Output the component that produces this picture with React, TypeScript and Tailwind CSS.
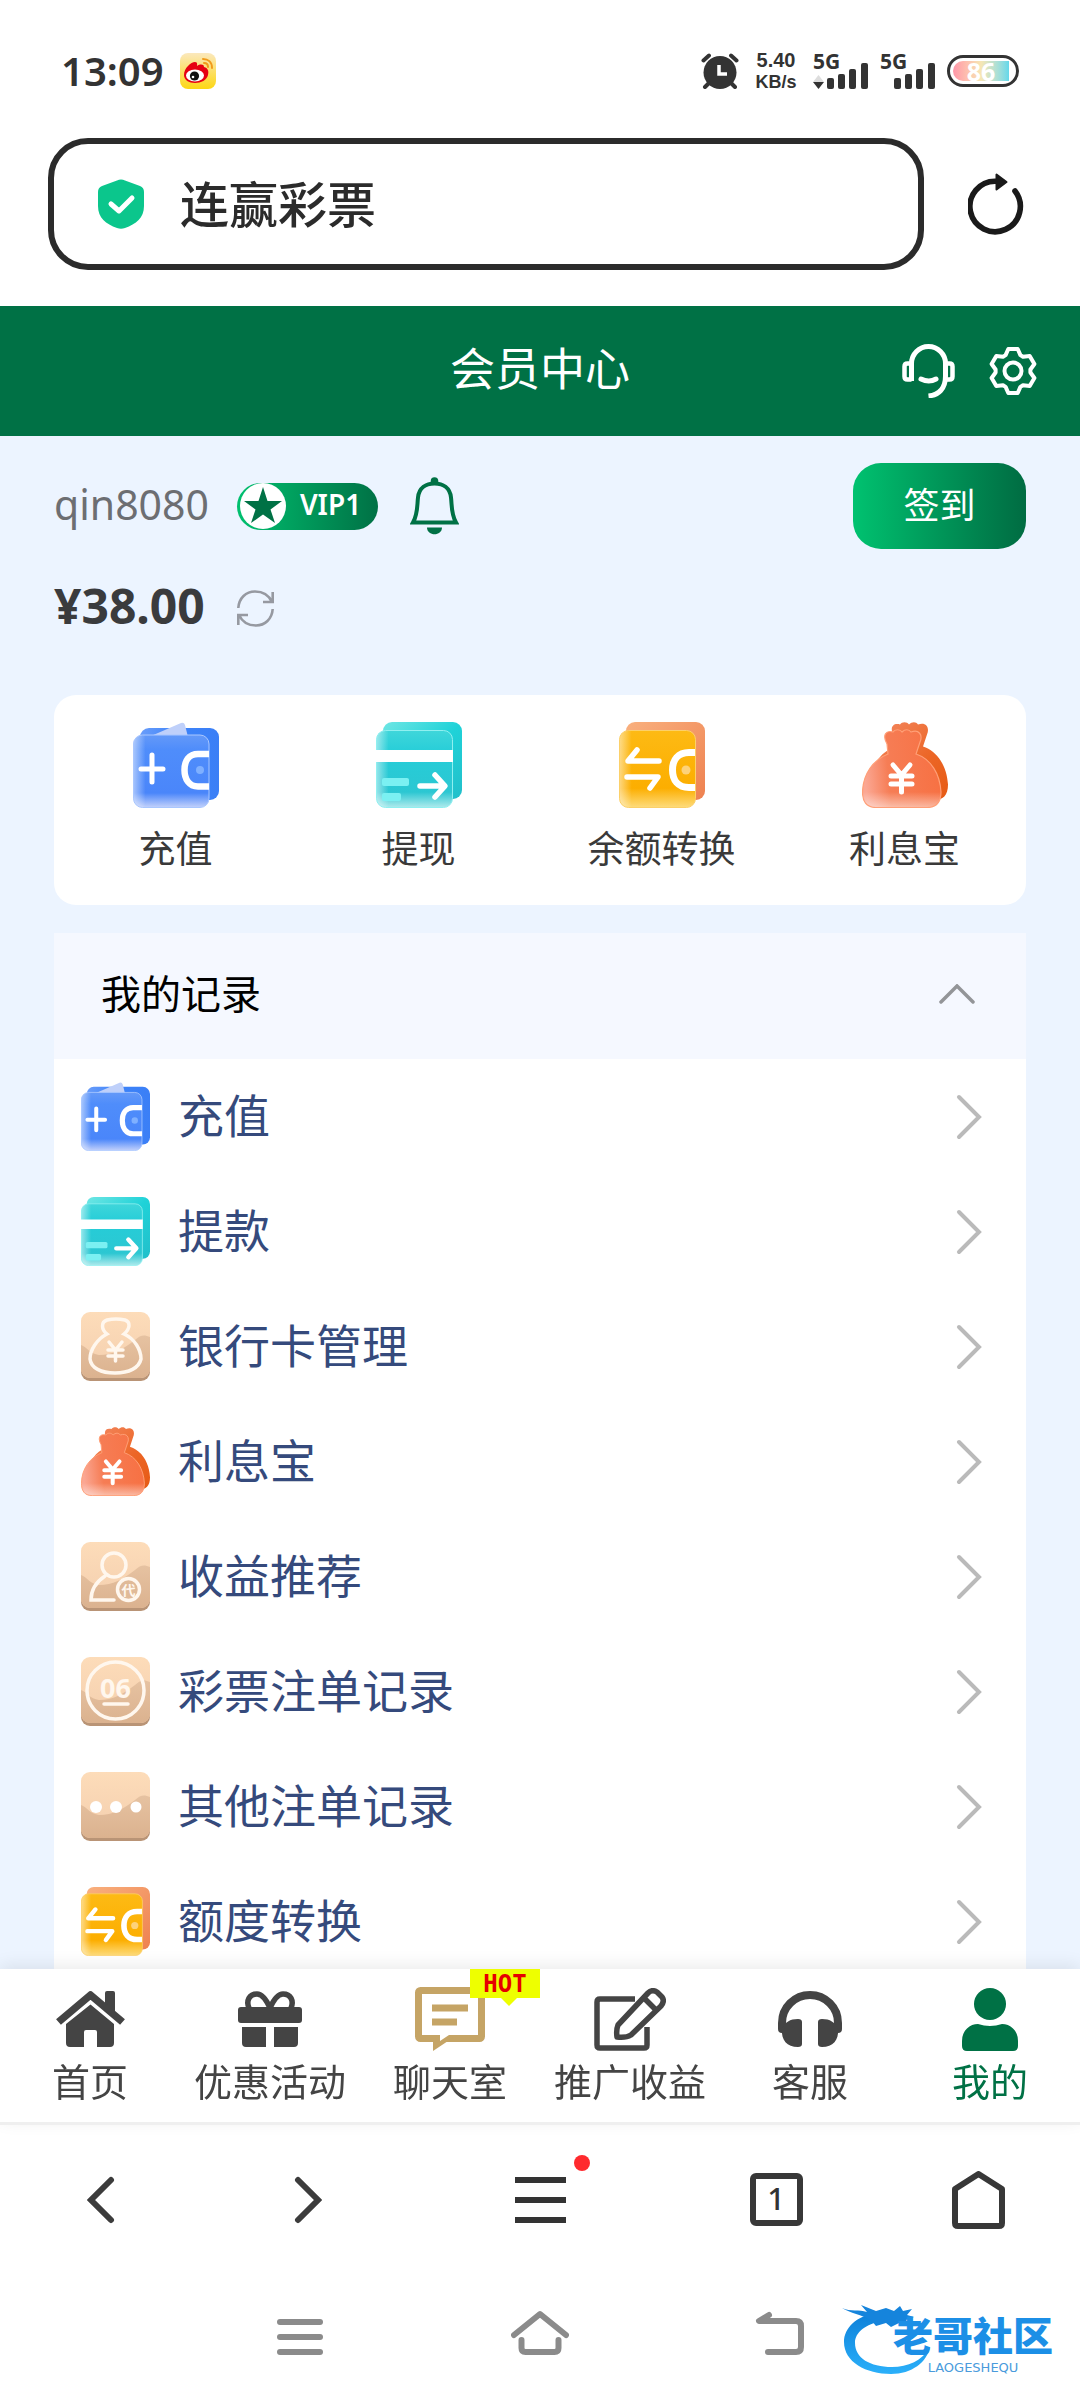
import React from "react";

const GREEN = "#007145";

/* ---------- status bar ---------- */

function WeiboIcon() {
  return (
    <svg className="h-9 w-9" viewBox="0 0 36 36" aria-hidden="true">
      <defs>
        <linearGradient id="weibo" x1="0" y1="0" x2="0" y2="1">
          <stop offset="0" stopColor="#fbe8bd" />
          <stop offset="1" stopColor="#fdd713" />
        </linearGradient>
      </defs>
      <rect width="36" height="36" rx="8" fill="url(#weibo)" />
      <path d="M4 22C4 15 11 9 15 9c3 0 2 3 2 4 3-2 7-2 7 1 4 1 5 4 4 8-1 5-7 8-13 8S4 27 4 22Z" fill="#e60012" />
      <ellipse cx="15" cy="22.500" rx="9" ry="6" fill="#fff" />
      <circle cx="14.500" cy="23" r="4.600" fill="#111" />
      <circle cx="13" cy="24" r="1.300" fill="#fff" />
      <path d="M23 6c5 0 9 3 9 9M24 10c3 0 4 2 4 4" stroke="#f19a1b" strokeWidth="2" fill="none" strokeLinecap="round" />
    </svg>
  );
}

function AlarmIcon() {
  return (
    <svg className="h-9 w-[38px]" viewBox="0 0 38 36" fill="none" stroke="#333" strokeLinecap="round" aria-hidden="true">
      <circle cx="19" cy="19.500" r="16.500" fill="#333" stroke="none" />
      <path d="M2.500 7.500 8 2.500M35.500 7.500 30 2.500" strokeWidth="4" />
      <path d="M8 30 4 34M30 30l4 4" strokeWidth="4" />
      <path d="M18 12v9h8" stroke="#fff" strokeWidth="3.500" strokeLinecap="butt" />
    </svg>
  );
}

function Signal({ traffic = false }: { traffic?: boolean }) {
  return (
    <div className="flex h-10 w-[56px] flex-col">
      <span className="text-[21px] leading-5 font-bold">5G</span>
      <svg className="-mt-2 h-7 w-14" viewBox="0 0 56 28" fill="#333" aria-hidden="true">
        {traffic && (
          <>
            <path d="M0 19 5.500 12 11 19Z" fill="#ddd" />
            <path d="M0 19h11L5.500 26Z" />
          </>
        )}
        <rect x="14" y="15" width="7" height="11" rx="2" />
        <rect x="25" y="11" width="7" height="15" rx="2" />
        <rect x="36" y="6" width="7" height="20" rx="2" />
        <rect x="48" y="0" width="7" height="26" rx="2" />
      </svg>
    </div>
  );
}

function StatusBar() {
  return (
    <div className="flex h-10 items-center justify-between pr-[61px] pl-[61px] text-[#333]">
      <div className="flex items-center gap-4">
        <span className="text-[40px] leading-10 font-semibold">13:09</span>
        <WeiboIcon />
      </div>
      <div className="flex items-center gap-[11px]">
        <AlarmIcon />
        <div className="flex w-[52px] flex-col items-center font-['Liberation_Sans',sans-serif] text-[20px] leading-[22px] font-bold">
          <span>5.40</span>
          <span className="text-[18px]">KB/s</span>
        </div>
        <Signal traffic />
        <Signal />
        <div className="flex h-8 w-[72px] items-center rounded-full border-[3px] border-[#333] bg-white p-[3px]">
          <div className="flex h-full w-14 items-center justify-center rounded-l-full bg-linear-to-r from-[#ff96a8] via-[#f6e6b4] to-[#64d8ea] text-[25px] leading-5 font-bold text-white">
            86
          </div>
        </div>
      </div>
    </div>
  );
}

function AddressBar() {
  return (
    <div className="flex items-center gap-11 pt-[47px] pr-[56px] pb-9 pl-12">
      <div className="flex h-[132px] min-w-0 flex-1 items-center rounded-[40px] border-[6px] border-[#2b2b2b] pl-11">
        <svg className="h-[50px] w-[46px] shrink-0" viewBox="0 0 46 50" aria-hidden="true">
          <path d="M19 1.500q4-2 8 0L42 7q4 1.500 4 6v14c0 12-8 18-19 22q-4 1.500-8 0C8 45 0 39 0 27V13q0-4.500 4-6Z" fill="#0bc68c" />
          <path d="m13 25 8 7 13-13" stroke="#fff" strokeWidth="5" fill="none" strokeLinecap="round" strokeLinejoin="round" />
        </svg>
        <input
          aria-label="地址栏"
          defaultValue="连赢彩票"
          className="ml-9 min-w-0 flex-1 bg-transparent text-[49px] leading-[60px] font-medium text-[#2b2b2b] outline-none"
        />
      </div>
      <button type="button" aria-label="刷新页面">
        <svg className="block h-[62px] w-14" viewBox="0 0 56 62" aria-hidden="true">
          <path d="M47 18A25.200 25.200 0 1 1 28 8.300" fill="none" stroke="#1a1a1a" strokeWidth="5.600" strokeLinecap="round" />
          <path d="M28.500 1.500v15L38.500 9Z" fill="#1a1a1a" stroke="#1a1a1a" strokeWidth="2" strokeLinejoin="round" />
        </svg>
      </button>
    </div>
  );
}

/* ---------- page header ---------- */

const gearPath =
  Array.from({ length: 6 }, (_, i) => i * 60 - 90)
    .flatMap((a) => [
      [a - 25, 17.5],
      [a - 12, 22.5],
      [a + 12, 22.5],
      [a + 25, 17.5],
    ])
    .map(([a, r], i) => {
      const t = (a * Math.PI) / 180;
      return `${i ? "L" : "M"}${(25 + r * Math.cos(t)).toFixed(1)} ${(25 + r * Math.sin(t)).toFixed(1)}`;
    })
    .join("") + "Z";

function PageHeader() {
  return (
    <header className="grid h-[130px] shrink-0 grid-cols-[1fr_auto_1fr] items-center bg-[#007145] text-white">
      <h1 className="col-start-2 pb-1 text-[45px] leading-[60px]">会员中心</h1>
      <div className="flex items-center justify-end gap-8 pr-[42px]">
        <button type="button" aria-label="在线客服">
          <svg className="block h-[54px] w-[54px]" viewBox="0 0 54 54" fill="none" stroke="#fff" strokeWidth="5" aria-hidden="true">
            <path d="M9.500 37V19.500a17 17 0 0 1 34 0V32c0 13-7 19-17 20" />
            <path d="M9.500 35.500h-4q-3 0-3-3v-10q0-3 3-3h4M43.500 19.500h4q3 0 3 3v10q0 3-3 3h-4" strokeWidth="4.500" />
            <path d="M19 35q8 4 15 0" strokeLinecap="round" />
          </svg>
        </button>
        <button type="button" aria-label="设置">
          <svg className="block h-[50px] w-[50px]" viewBox="0 0 50 50" fill="none" stroke="#fff" strokeWidth="4" strokeLinejoin="round" aria-hidden="true">
            <path d={gearPath} />
            <circle cx="25" cy="25" r="8.500" />
          </svg>
        </button>
      </div>
    </header>
  );
}

/* ---------- coloured icons ---------- */

type IconProps = { className: string };

function WalletIcon({ className }: IconProps) {
  return (
    <svg className={className} viewBox="0 0 86 86" aria-hidden="true">
      <defs>
        <linearGradient id="walletBack" x1="0" y1="0" x2="1" y2="0">
          <stop offset="0" stopColor="#6a9dfa" />
          <stop offset=".5" stopColor="#3c83f9" />
          <stop offset="1" stopColor="#3b7ff6" />
        </linearGradient>
        <linearGradient id="walletFront" x1="0" y1="0" x2="0" y2="1">
          <stop offset="0" stopColor="#6499f8" />
          <stop offset=".2" stopColor="#4f8dfb" />
          <stop offset=".8" stopColor="#4a86fa" />
          <stop offset="1" stopColor="#c3d1fb" />
        </linearGradient>
        <linearGradient id="glassEdge" x1="0" y1="0" x2="1" y2="0">
          <stop offset="0" stopColor="#fff" stopOpacity=".5" />
          <stop offset=".16" stopColor="#fff" stopOpacity="0" />
        </linearGradient>
      </defs>
      <rect x="7" y="6" width="79" height="72" rx="9" fill="url(#walletBack)" />
      <path d="M18 14 48 1q3-1 4 2l3 12Z" fill="#bfd0fa" />
      <rect x=".500" y="13" width="75.500" height="72.500" rx="9" fill="url(#walletFront)" />
      <rect x=".500" y="13" width="75.500" height="72.500" rx="9" fill="url(#glassEdge)" stroke="#a9c7ff" strokeWidth="1" />
      <path d="M19 33v27M8 47h22" stroke="#fff" strokeWidth="5" strokeLinecap="round" />
      <path d="M76 32H65c-9 0-13.500 7-13.500 16S56 64.500 65 64.500h11" stroke="#fff" strokeWidth="6.500" fill="none" />
      <circle cx="67" cy="48" r="4" fill="#7fb0ff" />
    </svg>
  );
}

function CardIcon({ className }: IconProps) {
  return (
    <svg className={className} viewBox="0 0 86 86" aria-hidden="true">
      <defs>
        <linearGradient id="cardBack" x1="0" y1="0" x2="1" y2="1">
          <stop offset="0" stopColor="#6fe6e4" />
          <stop offset=".5" stopColor="#1fd2d8" />
          <stop offset="1" stopColor="#22bfca" />
        </linearGradient>
        <linearGradient id="cardFront" x1="0" y1="0" x2="0" y2="1">
          <stop offset="0" stopColor="#3fd6da" />
          <stop offset=".3" stopColor="#25cdd8" />
          <stop offset=".8" stopColor="#2cc7d2" />
          <stop offset="1" stopColor="#aeeaec" />
        </linearGradient>
      </defs>
      <rect x="7" y="0" width="79" height="77" rx="9" fill="url(#cardBack)" />
      <rect x=".500" y="8.500" width="76" height="77" rx="9" fill="url(#cardFront)" />
      <rect x=".500" y="8.500" width="76" height="77" rx="9" fill="url(#glassEdge)" stroke="#8ff0f0" strokeWidth="1" />
      <path d="M0 28h77v12H0Z" fill="#fff" />
      <rect x="6" y="56" width="27" height="8" rx="2" fill="#7bf0f2" />
      <rect x="6" y="71" width="19" height="8" rx="2" fill="#7bf0f2" />
      <path d="M44 64h24M59 53l10 11-10 11" stroke="#fff" strokeWidth="5.500" fill="none" strokeLinecap="round" strokeLinejoin="round" />
    </svg>
  );
}

function TransferIcon({ className }: IconProps) {
  return (
    <svg className={className} viewBox="0 0 86 86" aria-hidden="true">
      <defs>
        <linearGradient id="transferBack" x1="0" y1="0" x2="1" y2="1">
          <stop offset="0" stopColor="#f9b07e" />
          <stop offset="1" stopColor="#ee8150" />
        </linearGradient>
        <linearGradient id="transferFront" x1="0" y1="0" x2="0" y2="1">
          <stop offset="0" stopColor="#fdba14" />
          <stop offset=".75" stopColor="#fcae00" />
          <stop offset="1" stopColor="#fedc7c" />
        </linearGradient>
      </defs>
      <rect x="7" y="0" width="79" height="78" rx="9" fill="url(#transferBack)" />
      <rect x=".500" y="8.500" width="76" height="77" rx="9" fill="url(#transferFront)" />
      <rect x=".500" y="8.500" width="76" height="77" rx="9" fill="url(#glassEdge)" stroke="#fcd069" strokeWidth="1" />
      <path d="M40 39H9l9-11M8 55h31l-8 11" stroke="#fff" strokeWidth="5.500" fill="none" strokeLinecap="round" strokeLinejoin="round" />
      <path d="M76 30.500H70C59 30.500 53.500 38 53.500 48S59 65.500 70 65.500h6" stroke="#fff" strokeWidth="7" fill="none" />
      <circle cx="67" cy="48" r="4.500" fill="#fdd27a" />
    </svg>
  );
}

const BAG =
  "M25 22C20 13 24 8 31 10c2-3 7-3 9 0 3-3 7-3 9 0 8-3 12 3 9 10l-4 12c15 5 24 20 25 38 0 11-5 15.500-14 15.500H14C4 85.500.500 79 .500 70 1 52 11 38 26 32Z";

function MoneyBagIcon({ className }: IconProps) {
  return (
    <svg className={className} viewBox="0 0 86 86" aria-hidden="true">
      <defs>
        <linearGradient id="bagBack" x1="0" y1="0" x2="1" y2="1">
          <stop offset="0" stopColor="#f48b66" />
          <stop offset=".6" stopColor="#ec6626" />
          <stop offset="1" stopColor="#e65a14" />
        </linearGradient>
        <linearGradient id="bagFront" x1="0" y1=".3" x2="1" y2=".2">
          <stop offset="0" stopColor="#fba793" />
          <stop offset=".3" stopColor="#f67d55" />
          <stop offset="1" stopColor="#f77042" />
        </linearGradient>
        <linearGradient id="bagFade" x1="0" y1="0" x2="0" y2="1">
          <stop offset=".8" stopColor="#fff" stopOpacity="0" />
          <stop offset="1" stopColor="#fff" stopOpacity=".5" />
        </linearGradient>
      </defs>
      <path d={BAG} transform="translate(7 -7.500)" fill="url(#bagBack)" />
      <path d={BAG} fill="url(#bagFront)" />
      <path d={BAG} fill="url(#bagFade)" stroke="#ff9f77" strokeWidth="1.200" />
      <g stroke="#fff" strokeWidth="5" strokeLinecap="round" strokeLinejoin="round" fill="none">
        <path d="m31 43 8.500 10L48 43M39.500 53v17M29 54h21M29 62h21" />
      </g>
    </svg>
  );
}

function TanTile({ className, children }: IconProps & { children: React.ReactNode }) {
  return (
    <svg className={className} viewBox="0 0 69 69" aria-hidden="true">
      <defs>
        <linearGradient id="tanTop" x1="0" y1="0" x2="0" y2="1">
          <stop offset="0" stopColor="#fddcb9" />
          <stop offset="1" stopColor="#f3ceae" />
        </linearGradient>
        <linearGradient id="tanWave" x1="0" y1="0" x2="0" y2="1">
          <stop offset="0" stopColor="#e6c2a1" />
          <stop offset="1" stopColor="#dbb28f" />
        </linearGradient>
        <clipPath id="tanClip">
          <rect width="69" height="66" rx="9" />
        </clipPath>
      </defs>
      <rect y="3" width="69" height="66" rx="9" fill="#b99476" />
      <g clipPath="url(#tanClip)">
        <rect width="69" height="66" fill="url(#tanTop)" />
        <path d="M0 33c6 2 9 9 18 10 14 0 24-6 36-15 6-6 10-5 15-3v41H0Z" fill="url(#tanWave)" />
      </g>
      {children}
    </svg>
  );
}

function BankBagIcon({ className }: IconProps) {
  return (
    <TanTile className={className}>
      <path
        d="M26 22c-6-5-6-12 0-14q9-2 18 0c6 2 5 9-1 14 11 5 17 16 17 25-2 9-12 14-26 14S10 56 9 47c0-9 7-20 17-25Z"
        fill="none"
        stroke="#fff7ee"
        strokeWidth="3.500"
      />
      <path
        d="m28 30 6.500 8 6.500-8M34.500 38v11M27 38h15M27 44h15"
        fill="none"
        stroke="#fff7ee"
        strokeWidth="3.500"
        strokeLinecap="round"
      />
    </TanTile>
  );
}

function ReferralIcon({ className }: IconProps) {
  return (
    <TanTile className={className}>
      <g fill="none" stroke="#fff7ee" strokeWidth="3.500" strokeLinecap="round">
        <circle cx="33" cy="23" r="12" />
        <path d="M24 34C15 40 10 47 10 58h23" />
        <circle cx="47.500" cy="47.500" r="11" fill="#e0ba98" />
      </g>
      <text x="47.500" y="53" textAnchor="middle" fontSize="14" fontWeight="700" fill="#fff7ee">
        代
      </text>
    </TanTile>
  );
}

function LotteryIcon({ className }: IconProps) {
  return (
    <TanTile className={className}>
      <circle cx="34.500" cy="33.500" r="28.500" fill="none" stroke="#fff7ee" strokeWidth="3.500" />
      <text x="34.500" y="41" textAnchor="middle" fontSize="27" fontWeight="700" fill="#fff7ee">
        06
      </text>
      <path d="M23 47h24" stroke="#fff7ee" strokeWidth="3.500" strokeLinecap="round" />
    </TanTile>
  );
}

function MoreIcon({ className }: IconProps) {
  return (
    <TanTile className={className}>
      <g fill="#fff">
        <circle cx="15" cy="35" r="6" />
        <circle cx="35" cy="35" r="6" />
        <circle cx="55" cy="35" r="5.500" />
      </g>
    </TanTile>
  );
}

/* ---------- member area ---------- */

function MemberInfo() {
  return (
    <section className="pt-[27px] pb-[52px]">
      <div className="flex h-[86px] items-center">
        <span className="pb-1 text-[41px] leading-[50px] text-[#6c6e72]">qin8080</span>
        <div className="ml-7 flex h-[47px] w-[141px] items-center rounded-full bg-linear-to-r from-[#00c06f] to-[#007145] pl-[3px]">
          <svg className="h-[46px] w-[46px]" viewBox="0 0 46 46" aria-hidden="true">
            <circle cx="23" cy="23" r="23" fill="#fff" />
            <path d="m23 4 4.500 14H42L30.500 26.500 35 40 23 31.500 11 40l4.500-13.500L4 18h14.500Z" fill={GREEN} />
          </svg>
          <span className="ml-[14px] pb-1 text-[28px] leading-8 font-semibold text-white">VIP1</span>
        </div>
        <button type="button" aria-label="消息通知" className="ml-8">
          <svg className="block h-[58px] w-[49px]" viewBox="0 0 49 58" aria-hidden="true">
            <circle cx="24.500" cy="4" r="3.800" fill={GREEN} />
            <path d="M3 45.500c5-9 4-17 5-25C9 11 16 6.500 24.500 6.500S40 11 41 20.500c1 8 0 16 5 25Z" fill="none" stroke={GREEN} strokeWidth="4" />
            <path d="M17 50.500h15c0 9-15 9-15 0Z" fill={GREEN} />
          </svg>
        </button>
        <button
          type="button"
          className="ml-auto h-[86px] w-[173px] rounded-[28px] bg-linear-to-r from-[#00c270] to-[#006c42] text-[36px] leading-[50px] text-white"
        >
          签到
        </button>
      </div>
      <div className="mt-6 flex h-[70px] items-center">
        <span className="pb-1 text-[48px] leading-[60px] font-bold text-[#3a3b3d]">¥38.00</span>
        <button type="button" aria-label="刷新余额" className="ml-8">
          <svg className="block h-[37px] w-[37px]" viewBox="0 0 37 37" fill="none" stroke="#9699a1" strokeWidth="2.600" aria-hidden="true">
            <path d="M1.300 18C2 8 9 1.500 18 1.500c8 0 14 4 17 10.500M35.700 2v10H26" />
            <path d="M35.700 19C35 29 28 35.500 19 35.500 11 35.500 5 31.500 2 25M1.300 35V25H11" />
          </svg>
        </button>
      </div>
    </section>
  );
}

const shortcuts = [
  { label: "充值", Icon: WalletIcon },
  { label: "提现", Icon: CardIcon },
  { label: "余额转换", Icon: TransferIcon },
  { label: "利息宝", Icon: MoneyBagIcon },
];

const records = [
  { label: "充值", Icon: WalletIcon },
  { label: "提款", Icon: CardIcon },
  { label: "银行卡管理", Icon: BankBagIcon },
  { label: "利息宝", Icon: MoneyBagIcon },
  { label: "收益推荐", Icon: ReferralIcon },
  { label: "彩票注单记录", Icon: LotteryIcon },
  { label: "其他注单记录", Icon: MoreIcon },
  { label: "额度转换", Icon: TransferIcon },
];

function Shortcuts() {
  return (
    <nav className="grid grid-cols-4 rounded-[22px] bg-white pt-[27px] pb-[31px]">
      {shortcuts.map(({ label, Icon }) => (
        <a key={label} href="#" className="flex flex-col items-center gap-4 text-[37px] leading-[50px] text-[#3a3a3a]">
          <Icon className="h-[86px] w-[86px]" />
          {label}
        </a>
      ))}
    </nav>
  );
}

function Records() {
  return (
    <section className="mt-7">
      <button
        type="button"
        aria-expanded="true"
        className="flex h-[126px] w-full items-center justify-between bg-[#f5f8ff] pr-[51px] pb-1 pl-[47px] text-[40px] leading-[50px] text-black"
      >
        我的记录
        <svg className="h-5 w-9" viewBox="0 0 36 20" fill="none" stroke="#939598" strokeWidth="3.500" strokeLinecap="round" aria-hidden="true">
          <path d="M2 18 18 2l16 16" />
        </svg>
      </button>
      <ul className="bg-white">
        {records.map(({ label, Icon }) => (
          <li key={label}>
            <a href="#" className="flex h-[115px] items-center gap-7 pr-[43px] pl-[27px] text-[46px] leading-[60px] text-[#354a7c]">
              <Icon className="h-[69px] w-[69px]" />
              <span className="flex-1 pb-1">{label}</span>
              <svg className="h-[46px] w-7" viewBox="0 0 28 46" fill="none" stroke="#bababa" strokeWidth="4" strokeLinecap="round" aria-hidden="true">
                <path d="m4 3 20 20L4 43" />
              </svg>
            </a>
          </li>
        ))}
      </ul>
    </section>
  );
}

/* ---------- tab bar ---------- */

const tabs = [
  {
    label: "首页",
    icon: (
      <svg className="h-14 w-[71px]" viewBox="0 0 71 56" fill="#444" aria-hidden="true">
        <path d="M50 2q0-2 2-2h6q2 0 2 2v20L50 14Z" />
        <path d="M3.500 31 35.500 4l32 27" fill="none" stroke="#444" strokeWidth="7.500" strokeLinejoin="round" />
        <path d="M11 33 35.500 13.500 59 33v19q0 4-4 4H42V41q0-2-2-2h-9q-2 0-2 2v15H15q-4 0-4-4Z" />
      </svg>
    ),
  },
  {
    label: "优惠活动",
    icon: (
      <svg className="h-14 w-16" viewBox="0 0 64 56" fill="#444" aria-hidden="true">
        <rect y="16" width="64" height="16" rx="3" />
        <path d="M4 36h24v20H8q-4 0-4-4ZM36 36h24v16q0 4-4 4H36Z" />
        <path d="M32 17C28 8 24 3 19 3c-8 0-11 7-8 14M32 17C36 8 40 3 45 3c8 0 11 7 8 14" fill="none" stroke="#444" strokeWidth="5.500" />
      </svg>
    ),
  },
  {
    label: "聊天室",
    hot: true,
    icon: (
      <svg className="h-16 w-[70px]" viewBox="0 0 70 64" fill="none" stroke="#c5a465" strokeWidth="7" aria-hidden="true">
        <rect x="3.500" y="3.500" width="63" height="48" rx="2" />
        <path d="M17 21h36M17 35h25" />
        <path d="M18 50h21L18 64Z" fill="#c5a465" stroke="none" />
        <path d="M25 48h9l-9 6Z" fill="#fff" stroke="none" />
      </svg>
    ),
  },
  {
    label: "推广收益",
    icon: (
      <svg className="h-[63px] w-[72px]" viewBox="0 0 72 63" fill="none" stroke="#444" strokeWidth="5.500" strokeLinejoin="round" aria-hidden="true">
        <path d="M41 11H6q-3 0-3 3v43q0 3 3 3h44q3 0 3-3V39" />
        <path d="M23 49q-1-7 1-12L54 5q4-4 9-1l5 5q3 4-1 9L37 47q-5 3-14 2ZM50 10l12 12" />
      </svg>
    ),
  },
  {
    label: "客服",
    icon: (
      <svg className="h-14 w-16" viewBox="0 0 64 56" aria-hidden="true">
        <path d="M4 38v-6a28 28 0 0 1 56 0v6" fill="none" stroke="#444" strokeWidth="8" strokeLinecap="round" />
        <path d="M4 38c3-7 8-10 16-10q4 0 4 3v22q0 3-4 3C9 56 3 49 4 38ZM60 38c-3-7-8-10-16-10q-4 0-4 3v22q0 3 4 3c11 0 17-7 16-18Z" fill="#444" />
      </svg>
    ),
  },
  {
    label: "我的",
    active: true,
    icon: (
      <svg className="h-[63px] w-14" viewBox="0 0 56 63" fill={GREEN} aria-hidden="true">
        <circle cx="28" cy="16" r="16" />
        <path d="M0 53c0-11 8-17 16-17q12 4 24 0c8 0 16 6 16 17v5q0 5-5 5H5q-5 0-5-5Z" />
      </svg>
    ),
  },
];

function TabBar() {
  return (
    <nav className="relative z-10 grid shrink-0 grid-cols-6 border-b-[3px] border-[#efefef] bg-white pt-[18px] pb-4 shadow-[0_-4px_16px_rgba(0,0,0,0.08)]">
      {tabs.map(({ label, icon, hot, active }) => (
        <a
          key={label}
          href="#"
          aria-current={active ? "page" : undefined}
          className={`flex flex-col items-center gap-[5px] text-[38px] leading-[50px] whitespace-nowrap ${active ? "text-[#007145]" : "text-[#444]"}`}
        >
          <span className="relative flex h-16 items-center">
            {icon}
            {hot && (
              <span className="absolute -top-[18px] left-[55px] flex h-[29px] w-[70px] items-center justify-center bg-[#eeff00] font-['DejaVu_Sans_Mono',monospace] text-[24px] leading-6 font-bold text-[#e60000] after:absolute after:top-full after:left-1/2 after:-ml-1 after:border-x-8 after:border-t-8 after:border-x-transparent after:border-t-[#eeff00]">
                HOT
              </span>
            )}
          </span>
          {label}
        </a>
      ))}
    </nav>
  );
}

/* ---------- browser and system navigation ---------- */

function BrowserBar() {
  return (
    <nav className="grid h-[149px] shrink-0 grid-cols-[202fr_212fr_252fr_220fr_184fr] items-center justify-items-center bg-white pr-[10px]">
      <button type="button" aria-label="后退">
        <svg className="block h-12 w-7" viewBox="0 0 28 48" fill="none" stroke="#3c3c3c" strokeWidth="6" strokeLinecap="round" aria-hidden="true">
          <path d="M24 4 4 24l20 20" />
        </svg>
      </button>
      <button type="button" aria-label="前进">
        <svg className="block h-12 w-7" viewBox="0 0 28 48" fill="none" stroke="#3c3c3c" strokeWidth="6" strokeLinecap="round" aria-hidden="true">
          <path d="m4 4 20 20L4 44" />
        </svg>
      </button>
      <button type="button" aria-label="菜单" className="relative flex flex-col gap-[14px]">
        <span className="h-[6px] w-[51px] bg-[#333]" />
        <span className="h-[6px] w-[51px] bg-[#333]" />
        <span className="h-[6px] w-[51px] bg-[#333]" />
        <span className="absolute -top-[22px] -right-6 h-4 w-4 rounded-full bg-[#ff2a2e]" />
      </button>
      <button
        type="button"
        aria-label="标签页"
        className="flex h-[53px] w-[53px] items-center justify-center rounded-[6px] border-[6px] border-[#383838] pb-1 text-[31px] leading-8 font-medium text-[#333]"
      >
        1
      </button>
      <button type="button" aria-label="主页">
        <svg className="block h-[58px] w-[53px]" viewBox="0 0 53 58" fill="none" stroke="#383838" strokeWidth="6" strokeLinejoin="round" aria-hidden="true">
          <path d="M3 18 26.500 3 50 18v34q0 3-3 3H6q-3 0-3-3Z" />
        </svg>
      </button>
    </nav>
  );
}

function SystemBar() {
  return (
    <nav className="relative grid h-[126px] shrink-0 grid-cols-3 items-center justify-items-center bg-white px-[180px]">
      <button type="button" aria-label="最近任务" className="flex flex-col gap-[9px]">
        <span className="h-[6px] w-[46px] rounded-full bg-[#8b8b8b]" />
        <span className="h-[6px] w-[46px] rounded-full bg-[#8b8b8b]" />
        <span className="h-[6px] w-[46px] rounded-full bg-[#8b8b8b]" />
      </button>
      <button type="button" aria-label="桌面" className="pb-2">
        <svg className="block h-[46px] w-[58px]" viewBox="0 0 58 46" fill="none" stroke="#8b8b8b" strokeWidth="6" strokeLinecap="round" strokeLinejoin="round" aria-hidden="true">
          <path d="M3 25 29 4l26 21M10.500 30v8q0 4 4 4h29q4 0 4-4v-8" />
        </svg>
      </button>
      <button type="button" aria-label="返回" className="pb-2">
        <svg className="block h-[44px] w-[50px]" viewBox="0 0 50 44" fill="none" stroke="#8b8b8b" strokeWidth="6" strokeLinecap="round" strokeLinejoin="round" aria-hidden="true">
          <path d="M14 4 4 10h37q5 0 5 5v21q0 5-5 5H13" />
        </svg>
      </button>
      <div className="absolute right-[18px] bottom-6 flex h-[76px] w-[220px] justify-end">
        <svg className="absolute inset-y-0 left-0 h-[76px] w-[90px]" viewBox="0 0 90 76" aria-hidden="true">
          <defs>
            <linearGradient id="dragon" x1="0" y1="0" x2="0" y2="1">
              <stop offset="0" stopColor="#0d7fd8" />
              <stop offset="1" stopColor="#2bb0fa" />
            </linearGradient>
          </defs>
          <path d="M36 12C14 16 2 28 2 42c0 20 22 32 47 32 21 0 36-12 39-27-8 14-22 20-38 20-22 0-37-9-37-24 0-11 11-19 27-22Z" fill="url(#dragon)" />
          <path d="M0 8c9 4 17 1 25 4l-6-7 15 6 10-3 8 3 6-5 3 5 9-2-5 6 7 2-8 3 5 5-12-2-8 4-5-4-10 3-5-6C20 15 8 13 0 8Z" fill="#1584dc" />
        </svg>
        <div className="relative flex w-[178px] flex-col items-center pt-[14px] font-['DejaVu_Sans','Noto_Sans_CJK_SC',sans-serif]">
          <span className="text-[40px] leading-[46px] font-black text-[#1c8fe6]">老哥社区</span>
          <span className="text-[13px] leading-4 text-[#4a9bdc]">LAOGESHEQU</span>
        </div>
      </div>
    </nav>
  );
}

export default function App() {
  return (
    <div className="flex h-screen flex-col overflow-hidden bg-white font-['Noto_Sans','Noto_Sans_CJK_SC',sans-serif]">
      <div className="shrink-0 pt-[51px]">
        <StatusBar />
        <AddressBar />
      </div>
      <PageHeader />
      <main className="min-h-0 flex-1 overflow-y-auto bg-[#ecf4ff] px-[54px] [scrollbar-width:none]">
        <MemberInfo />
        <Shortcuts />
        <Records />
      </main>
      <TabBar />
      <BrowserBar />
      <SystemBar />
    </div>
  );
}
